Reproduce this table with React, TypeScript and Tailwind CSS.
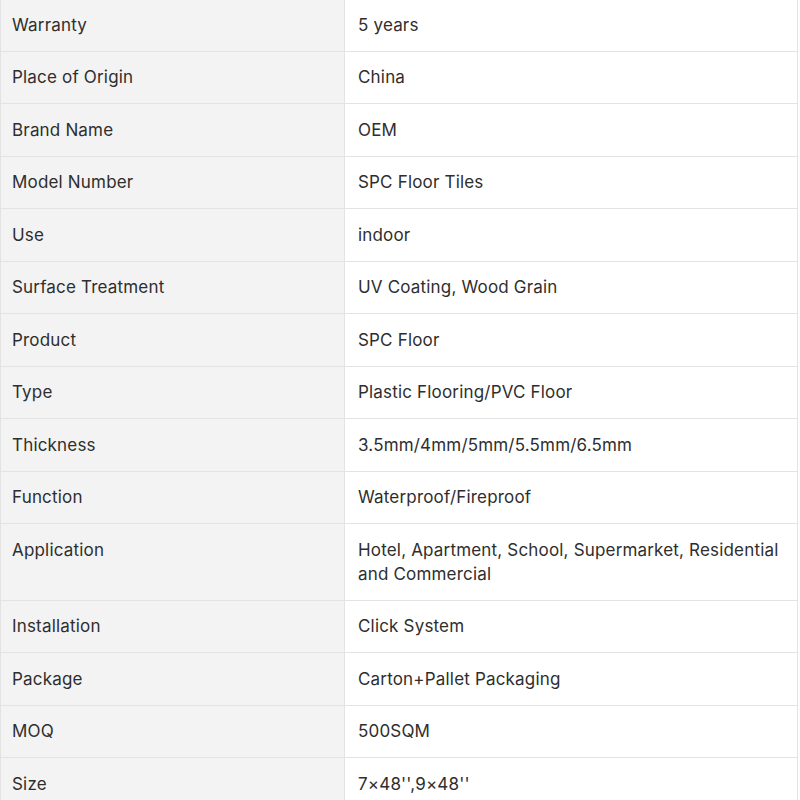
const rows: [string, string][] = [
	["Warranty", "5 years"],
	["Place of Origin", "China"],
	["Brand Name", "OEM"],
	["Model Number", "SPC Floor Tiles"],
	["Use", "indoor"],
	["Surface Treatment", "UV Coating, Wood Grain"],
	["Product", "SPC Floor"],
	["Type", "Plastic Flooring/PVC Floor"],
	["Thickness", "3.5mm/4mm/5mm/5.5mm/6.5mm"],
	["Function", "Waterproof/Fireproof"],
	["Application", "Hotel, Apartment, School, Supermarket, Residential and Commercial"],
	["Installation", "Click System"],
	["Package", "Carton+Pallet Packaging"],
	["MOQ", "500SQM"],
	["Size", "7×48'',9×48''"],
];

export default function App() {
	return (
		<div className="w-[800px] h-[800px] overflow-hidden bg-white font-['Inter',sans-serif] text-[17px] tracking-[0.18px] text-[#2e2e2e]">
			<table className="mt-[-2px] w-[798px] border-collapse table-fixed">
				<colgroup>
					<col className="w-[344px]" />
					<col />
				</colgroup>
				<tbody>
					{rows.map(([k, v]) => (
						<tr key={k}>
							<td className="border border-[#e3e3e3] bg-[#f3f3f3] pl-[11px] pr-3 py-[13.75px] leading-6 align-top">
								{k}
							</td>
							<td className="border border-[#e3e3e3] bg-white pl-[13px] pr-3 py-[13.75px] leading-6 align-top">
								{v}
							</td>
						</tr>
					))}
				</tbody>
			</table>
		</div>
	);
}
